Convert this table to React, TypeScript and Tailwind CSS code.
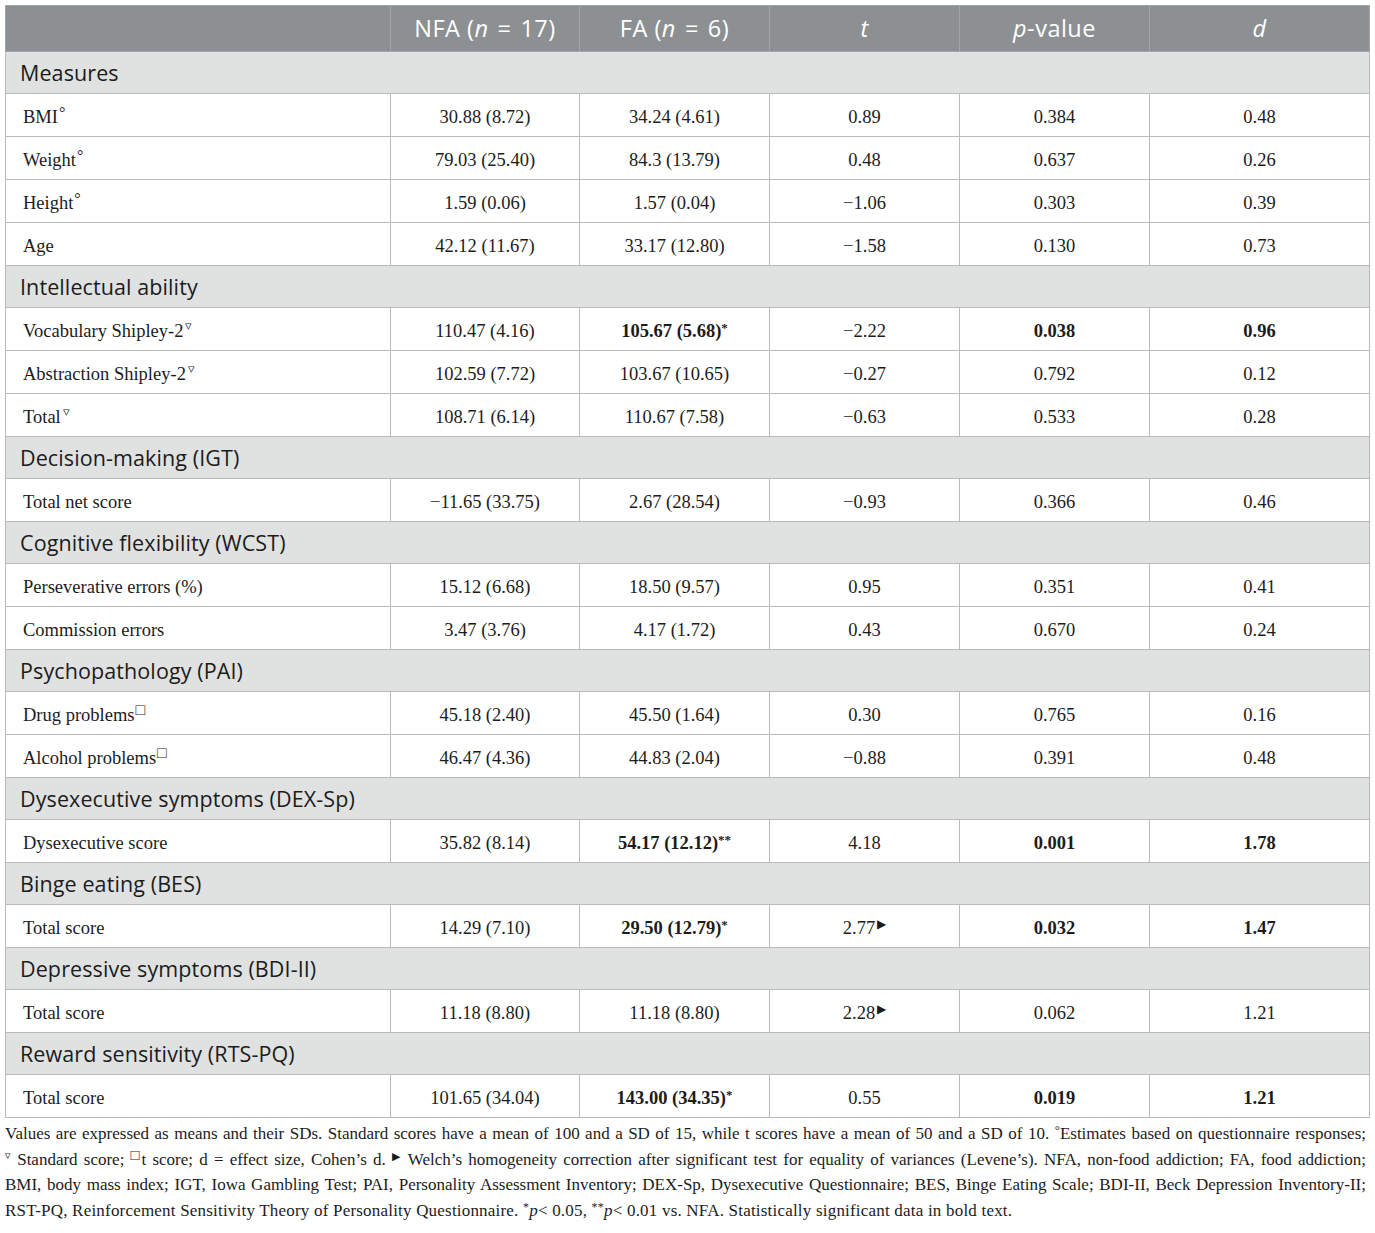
import { Fragment, type ReactNode } from "react";

type Row = {
  label: ReactNode;
  nfa: ReactNode;
  fa: ReactNode;
  t: ReactNode;
  p: ReactNode;
  d: ReactNode;
};

type Section = { title: string; rows: Row[] };

// raised mark that does not disturb the line box
const Mark = ({ children, cls }: { children: ReactNode; cls: string }) => (
  <span className={`relative leading-none ${cls}`}>{children}</span>
);

const Deg = () => <Mark cls="-top-[5px] ml-[1px] text-[16px]">°</Mark>;
const Std = () => <Mark cls="-top-[7px] ml-[2px] text-[13px]">▿</Mark>;
const Box = () => <Mark cls="-top-[6px] ml-[1px] text-[16px]">□</Mark>;
const Tri = () => <Mark cls="-top-[6px] ml-[2px] text-[12px]">▶</Mark>;
const Star = ({ n = 1 }: { n?: number }) => <Mark cls="-top-[5px] text-[13px]">{"*".repeat(n)}</Mark>;
const Eq = () => <span className="mx-[9px]">=</span>;

const SECTIONS: Section[] = [
  {
    title: "Measures",
    rows: [
      { label: <>BMI<Deg /></>, nfa: "30.88 (8.72)", fa: "34.24 (4.61)", t: "0.89", p: "0.384", d: "0.48" },
      { label: <>Weight<Deg /></>, nfa: "79.03 (25.40)", fa: "84.3 (13.79)", t: "0.48", p: "0.637", d: "0.26" },
      { label: <>Height<Deg /></>, nfa: "1.59 (0.06)", fa: "1.57 (0.04)", t: "−1.06", p: "0.303", d: "0.39" },
      { label: "Age", nfa: "42.12 (11.67)", fa: "33.17 (12.80)", t: "−1.58", p: "0.130", d: "0.73" },
    ],
  },
  {
    title: "Intellectual ability",
    rows: [
      { label: <>Vocabulary Shipley-2<Std /></>, nfa: "110.47 (4.16)", fa: <b>105.67 (5.68)<Star /></b>, t: "−2.22", p: <b>0.038</b>, d: <b>0.96</b> },
      { label: <>Abstraction Shipley-2<Std /></>, nfa: "102.59 (7.72)", fa: "103.67 (10.65)", t: "−0.27", p: "0.792", d: "0.12" },
      { label: <>Total<Std /></>, nfa: "108.71 (6.14)", fa: "110.67 (7.58)", t: "−0.63", p: "0.533", d: "0.28" },
    ],
  },
  {
    title: "Decision-making (IGT)",
    rows: [{ label: "Total net score", nfa: "−11.65 (33.75)", fa: "2.67 (28.54)", t: "−0.93", p: "0.366", d: "0.46" }],
  },
  {
    title: "Cognitive flexibility (WCST)",
    rows: [
      { label: "Perseverative errors (%)", nfa: "15.12 (6.68)", fa: "18.50 (9.57)", t: "0.95", p: "0.351", d: "0.41" },
      { label: "Commission errors", nfa: "3.47 (3.76)", fa: "4.17 (1.72)", t: "0.43", p: "0.670", d: "0.24" },
    ],
  },
  {
    title: "Psychopathology (PAI)",
    rows: [
      { label: <>Drug problems<Box /></>, nfa: "45.18 (2.40)", fa: "45.50 (1.64)", t: "0.30", p: "0.765", d: "0.16" },
      { label: <>Alcohol problems<Box /></>, nfa: "46.47 (4.36)", fa: "44.83 (2.04)", t: "−0.88", p: "0.391", d: "0.48" },
    ],
  },
  {
    title: "Dysexecutive symptoms (DEX-Sp)",
    rows: [{ label: "Dysexecutive score", nfa: "35.82 (8.14)", fa: <b>54.17 (12.12)<Star n={2} /></b>, t: "4.18", p: <b>0.001</b>, d: <b>1.78</b> }],
  },
  {
    title: "Binge eating (BES)",
    rows: [{ label: "Total score", nfa: "14.29 (7.10)", fa: <b>29.50 (12.79)<Star /></b>, t: <>2.77<Tri /></>, p: <b>0.032</b>, d: <b>1.47</b> }],
  },
  {
    title: "Depressive symptoms (BDI-II)",
    rows: [{ label: "Total score", nfa: "11.18 (8.80)", fa: "11.18 (8.80)", t: <>2.28<Tri /></>, p: "0.062", d: "1.21" }],
  },
  {
    title: "Reward sensitivity (RTS-PQ)",
    rows: [{ label: "Total score", nfa: "101.65 (34.04)", fa: <b>143.00 (34.35)<Star /></b>, t: "0.55", p: <b>0.019</b>, d: <b>1.21</b> }],
  },
];

const serif = "font-['Liberation_Serif','Times_New_Roman',serif]";
const sans = "font-['Open_Sans','Noto_Sans',sans-serif]";
const cell = "border border-[#b9bbbb] pt-[6px] text-center";
const head = "border border-[#a3a6a7] font-normal";
const justLine = "text-justify [text-align-last:justify] whitespace-nowrap";

export default function App() {
  return (
    <div className="min-h-[1233px] w-[1375px] bg-white px-[5px] pt-[5px] text-[#1c1c1c]">
      <table className="w-[1364px] table-fixed border-collapse border border-[#b0b2b2]">
        <colgroup>
          <col className="w-[385px]" />
          <col className="w-[189px]" />
          <col className="w-[190px]" />
          <col className="w-[190px]" />
          <col className="w-[190px]" />
          <col className="w-[220px]" />
        </colgroup>
        <thead>
          <tr className={`h-[46px] bg-[#8c9092] text-[23.5px] tracking-[0.5px] text-white ${sans}`}>
            <th className={head} />
            <th className={head}>NFA (<i>n</i><Eq />17)</th>
            <th className={head}>FA (<i>n</i><Eq />6)</th>
            <th className={head}><i>t</i></th>
            <th className={head}><i>p</i>-value</th>
            <th className={head}><i>d</i></th>
          </tr>
        </thead>
        <tbody>
          {SECTIONS.map((section) => (
            <Fragment key={section.title}>
              <tr className="h-[42px] bg-[#e0e2e1]">
                <td colSpan={6} className={`border border-[#b9bbbb] px-[14px] pt-[2px] text-left text-[21.5px] tracking-[0.1px] ${sans}`}>
                  {section.title}
                </td>
              </tr>
              {section.rows.map((row, i) => (
                <tr key={i} className={`h-[43px] text-[18.5px] ${serif}`}>
                  <td className="border border-[#b9bbbb] px-[17px] pt-[6px] text-left">{row.label}</td>
                  <td className={cell}>{row.nfa}</td>
                  <td className={cell}>{row.fa}</td>
                  <td className={cell}>{row.t}</td>
                  <td className={cell}>{row.p}</td>
                  <td className={cell}>{row.d}</td>
                </tr>
              ))}
            </Fragment>
          ))}
        </tbody>
      </table>

      <div className={`mt-[3px] w-[1361px] text-[17px] leading-[25.5px] ${serif}`}>
        <div className={justLine}>
          Values are expressed as means and their SDs. Standard scores have a mean of 100 and a SD of 15, while t scores have a mean of 50 and a SD of 10.{" "}
          <Mark cls="-top-[5px] text-[13px]">°</Mark>Estimates based on questionnaire responses;
        </div>
        <div className={justLine}>
          <Mark cls="-top-[6px] text-[11px]">▿</Mark> Standard score; <Mark cls="-top-[5px] text-[15px]">□</Mark>t score; d = effect size, Cohen’s d.{" "}
          <Mark cls="-top-[5px] text-[11px]">▶</Mark> Welch’s homogeneity correction after significant test for equality of variances (Levene’s). NFA, non-food addiction; FA, food addiction;
        </div>
        <div className={justLine}>
          BMI, body mass index; IGT, Iowa Gambling Test; PAI, Personality Assessment Inventory; DEX-Sp, Dysexecutive Questionnaire; BES, Binge Eating Scale; BDI-II, Beck Depression Inventory-II;
        </div>
        <div className="whitespace-nowrap tracking-[0.2px]">
          RST-PQ, Reinforcement Sensitivity Theory of Personality Questionnaire. <Mark cls="-top-[5px] text-[12px]">*</Mark><i>p</i>&lt; 0.05,{" "}
          <Mark cls="-top-[5px] text-[12px]">**</Mark><i>p</i>&lt; 0.01 vs. NFA. Statistically significant data in bold text.
        </div>
      </div>
    </div>
  );
}
